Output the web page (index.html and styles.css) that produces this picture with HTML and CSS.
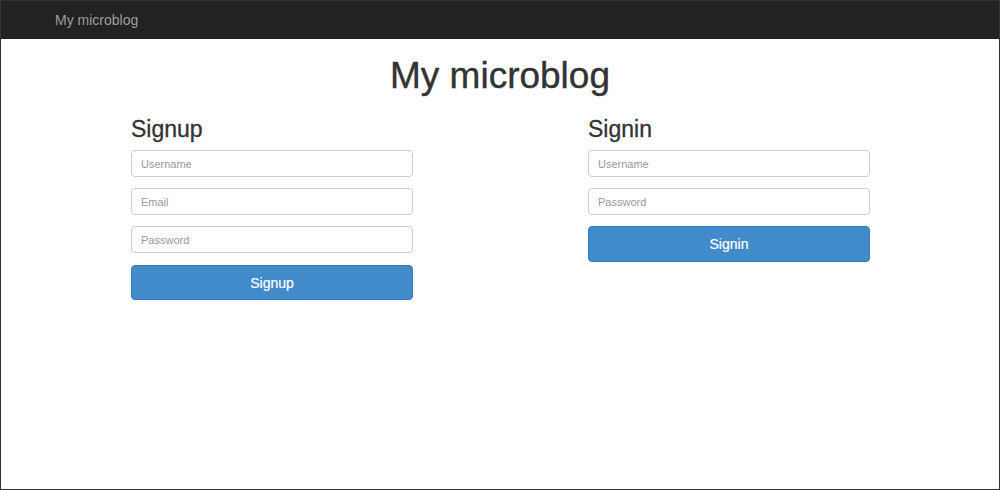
FILE: index.html
```html
<!DOCTYPE html>
<html>
<head>
<meta charset="utf-8">
<link rel="stylesheet" href="styles.css">
</head>
<body>
<div class="frame">
  <nav class="navbar"><span class="brand">My microblog</span></nav>
  <h1 class="title">My microblog</h1>
  <div class="forms">
    <form class="panel">
      <h2>Signup</h2>
      <input class="field" type="text" placeholder="Username">
      <input class="field" type="text" placeholder="Email">
      <input class="field" type="password" placeholder="Password">
      <button class="btn btn-signup" type="button">Signup</button>
    </form>
    <form class="panel">
      <h2>Signin</h2>
      <input class="field" type="text" placeholder="Username">
      <input class="field" type="password" placeholder="Password">
      <button class="btn btn-signin" type="button">Signin</button>
    </form>
  </div>
</div>
</body>
</html>
```
FILE: styles.css
```css
* { box-sizing: border-box; }
html, body { margin: 0; padding: 0; }
body {
  font-family: "Liberation Sans", Arial, sans-serif;
  color: #333;
  background: #fff;
}
.frame {
  width: 1000px;
  height: 490px;
  border: 1px solid #333;
  overflow: hidden;
}
.navbar {
  height: 38px;
  background: #222;
  display: flex;
  align-items: center;
  padding-left: 54px;
}
.brand {
  color: #9d9d9d;
  font-size: 14px;
}
.title {
  margin: 17px 0 0;
  text-align: center;
  font-size: 37px;
  font-weight: 500;
  line-height: 40px;
  color: #333;
  -webkit-text-stroke: 0.4px #333;
}
.forms {
  margin-left: 130px;
  display: flex;
  gap: 175px;
}
.panel {
  width: 282px;
  display: flex;
  flex-direction: column;
}
.panel h2 {
  margin: 21px 0 8px;
  font-size: 23px;
  font-weight: 500;
  line-height: 25px;
  -webkit-text-stroke: 0.3px #333;
}
.field {
  height: 27px;
  border: 1px solid #ccc;
  border-radius: 4px;
  padding: 0 9px;
  font-family: "Liberation Sans", Arial, sans-serif;
  font-size: 11px;
  margin: 0 0 11px;
  color: #555;
}
.field::placeholder { color: #999; }
.btn {
  background: #428bca;
  border: 1px solid #357ebd;
  border-radius: 4px;
  color: #fff;
  font-family: "Liberation Sans", Arial, sans-serif;
  font-size: 14px;
  height: 35px;
  padding: 0;
  -webkit-text-stroke: 0.2px #fff;
}
.btn-signup { margin-top: 1px; }
.btn-signin { height: 36px; }
```
